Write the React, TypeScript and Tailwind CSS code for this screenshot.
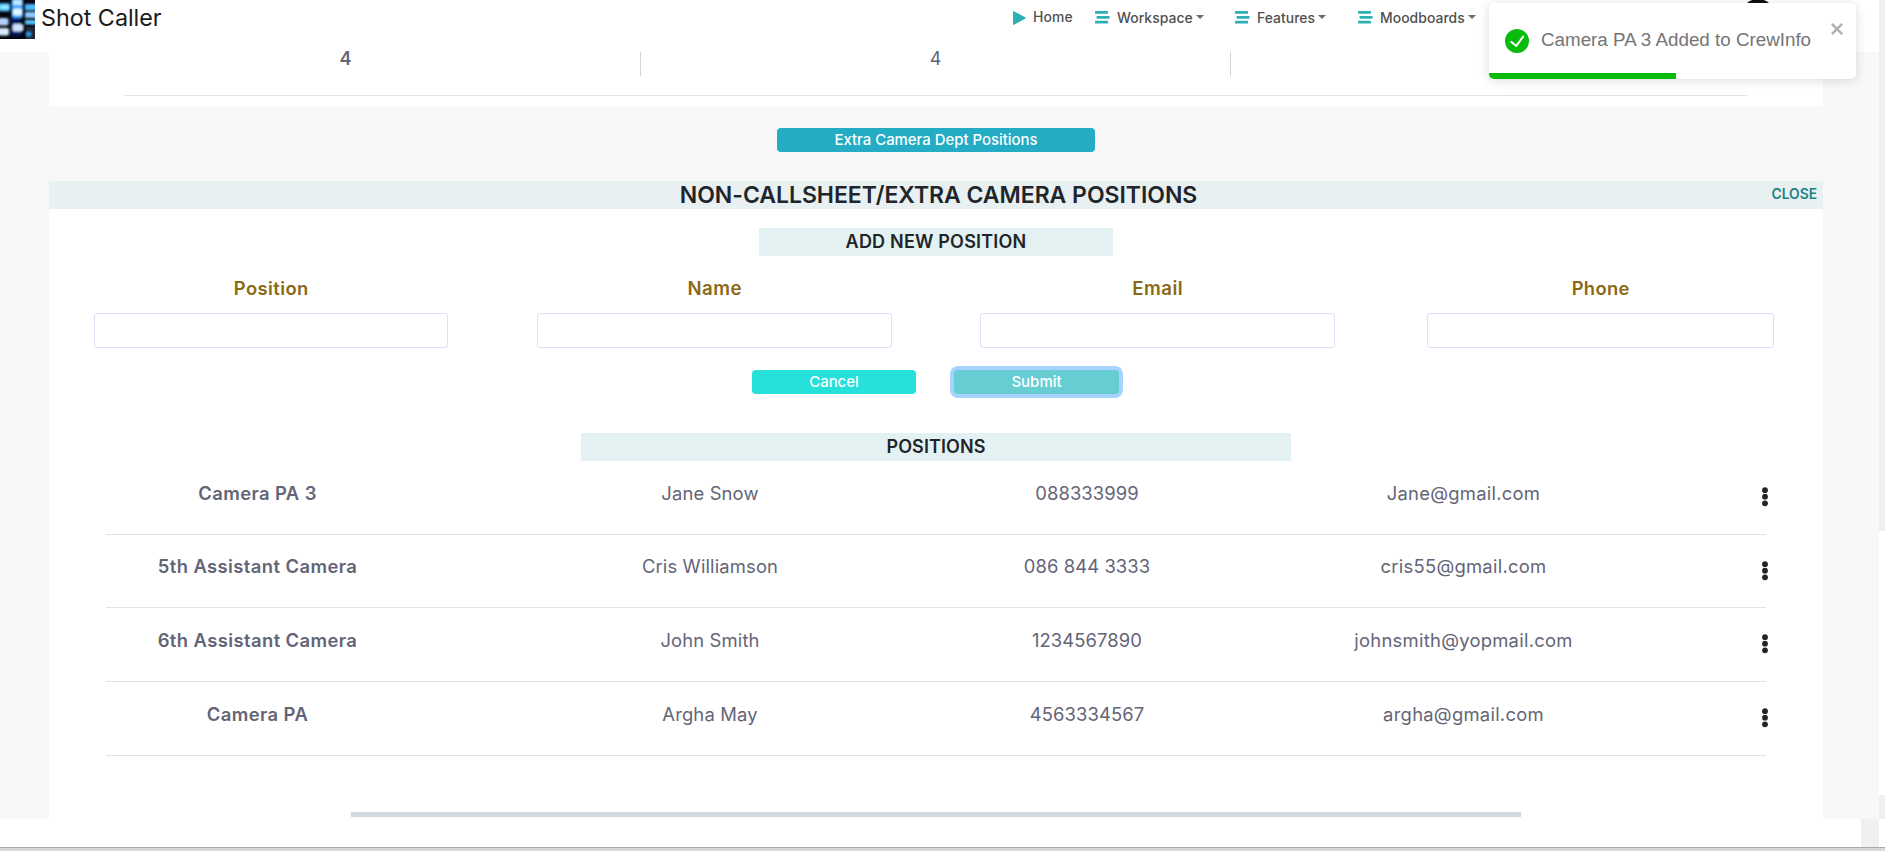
import type { ReactNode } from "react";

type Position = { title: string; name: string; phone: string; email: string; height: string; offset: string };

const positions: Position[] = [
  { title: "Camera PA 3", name: "Jane Snow", phone: "088333999", email: "Jane@gmail.com", height: "h-[74px]", offset: "pt-[19px]" },
  { title: "5th Assistant Camera", name: "Cris Williamson", phone: "086 844 3333", email: "cris55@gmail.com", height: "h-[73px]", offset: "pt-[18px]" },
  { title: "6th Assistant Camera", name: "John Smith", phone: "1234567890", email: "johnsmith@yopmail.com", height: "h-[74px]", offset: "pt-[19px]" },
  { title: "Camera PA", name: "Argha May", phone: "4563334567", email: "argha@gmail.com", height: "h-[74px]", offset: "pt-[19px]" },
];

function Logo() {
  return (
    <svg className="h-[39px] w-[35px] shrink-0" viewBox="0 0 35 39">
      <defs>
        <filter id="glow" x="-20%" y="-20%" width="140%" height="140%">
          <feGaussianBlur stdDeviation="0.8" />
        </filter>
      </defs>
      <rect width="35" height="39" fill="#06070f" />
      <rect x="26" y="27" width="9" height="12" fill="#25252e" />
      <g filter="url(#glow)">
        <rect x="11" y="0" width="10" height="36" fill="#02125e" />
        <rect x="-2" y="3" width="12" height="8.5" rx="2" fill="#35aaf0" />
        <rect x="0" y="5" width="9" height="4.5" rx="1" fill="#8fe6ff" />
        <rect x="12" y="-2" width="11" height="20" rx="2" fill="#3a9dfa" />
        <rect x="13" y="0" width="9" height="5" rx="1" fill="#bdeaff" />
        <rect x="13" y="8.5" width="9" height="7" rx="2" fill="#e3fbff" />
        <rect x="25" y="4" width="12" height="6.5" rx="1" fill="#4fb8fa" />
        <rect x="25" y="12" width="12" height="6" rx="1" fill="#8bcbff" />
        <rect x="25" y="20" width="12" height="4.5" rx="1" fill="#58c8ff" />
        <rect x="-2" y="18" width="10.5" height="7.5" rx="2" fill="#b4d2ff" />
        <rect x="-2" y="28" width="11" height="7.5" rx="2" fill="#d5edff" />
        <rect x="12.5" y="24" width="11" height="7.5" rx="2" fill="#cfe2ff" />
        <rect x="26" y="31.5" width="5.5" height="5" rx="1.5" fill="#219cf5" />
      </g>
    </svg>
  );
}

function LinesIcon() {
  return (
    <svg className="h-[13px] w-[15px] shrink-0" viewBox="0 0 15 13" fill="#2bb1b3">
      <rect x="0" y="0" width="13" height="2.8" rx="0.6" />
      <rect x="1.6" y="4.9" width="13" height="2.8" rx="0.6" />
      <rect x="0" y="9.7" width="13" height="2.8" rx="0.6" />
    </svg>
  );
}

function NavMenu({ children, width }: { children: ReactNode; width: string }) {
  return (
    <div className={`flex shrink-0 items-center ${width}`}>
      <LinesIcon />
      <span className="ml-[7px] mt-[2px] tracking-[0.05px]">{children}</span>
      <svg className="-mt-px ml-[3px] h-[4px] w-[8px]" viewBox="0 0 8 4" fill="#6b6b6b">
        <path d="M0 0h8L4 4z" />
      </svg>
    </div>
  );
}

function Header() {
  return (
    <header className="flex h-[52px] w-[1879px] shrink-0 items-start overflow-hidden bg-white">
      <Logo />
      <div className="ml-[6px] w-[972px] pt-px text-[23.3px] leading-[34px] text-[#1a1a1a]">Shot Caller</div>
      <nav className="flex h-[35px] items-center text-[13.9px] font-[450] text-[#505050]">
        <div className="flex w-[82px] items-center">
          <svg className="mt-[2px] h-[14px] w-[13px]" viewBox="0 0 13 14" fill="#2bb1b3">
            <path d="M0 1Q0 0 1 .3L12.4 6.4Q13 7 12.4 7.6L1 13.7Q0 14 0 13z" />
          </svg>
          <span className="ml-[7px] tracking-[0.15px]">Home</span>
        </div>
        <NavMenu width="w-[140px]">Workspace</NavMenu>
        <NavMenu width="w-[123px]">Features</NavMenu>
        <NavMenu width="w-[388px]">Moodboards</NavMenu>
      </nav>
      <div className="-mt-px h-[34px] w-[34px] -translate-x-[5px] shrink-0 rounded-full bg-[#0c100e]" />
    </header>
  );
}

function Toast() {
  return (
    <div className="absolute left-[1489px] top-[3px] flex h-[76px] w-[367px] flex-col overflow-hidden rounded-[5px] bg-white shadow-[0_1px_10px_0_rgba(0,0,0,0.1),0_2px_15px_0_rgba(0,0,0,0.05)]">
      <div className="flex h-[70px] items-start pl-[16px]">
        <svg className="mt-[26px] h-[24px] w-[24px] shrink-0" viewBox="0 0 24 24" fill="#07bc0c">
          <path d="M12 0a12 12 0 1012 12A12.014 12.014 0 0012 0zm6.927 8.2l-6.845 9.289a1.011 1.011 0 01-1.43.188l-4.888-3.908a1 1 0 111.25-1.562l4.076 3.261 6.227-8.451a1 1 0 111.61 1.183z" />
        </svg>
        <span className="ml-[12px] mt-[25px] w-[290px] whitespace-nowrap font-['Liberation_Sans',sans-serif] text-[18.8px] leading-6 text-[#757575]">
          Camera PA 3 Added to CrewInfo
        </span>
        <svg className="mt-[20px] h-[12px] w-[12px] shrink-0" viewBox="1 3 10.46 10.46" fill="#b1b1b1">
          <path
            fillRule="evenodd"
            d="M7.71 8.23l3.75 3.75-1.48 1.48-3.75-3.75-3.75 3.75L1 11.98l3.75-3.75L1 4.48 2.48 3l3.75 3.75L9.98 3l1.48 1.48-3.75 3.75z"
          />
        </svg>
      </div>
      <div className="h-[6px] w-[187px] bg-[#07bc0c]" />
    </div>
  );
}

function Field({ label, className, labelClass }: { label: string; className: string; labelClass: string }) {
  return (
    <label className={`flex flex-col items-center ${className}`}>
      <span className={`pl-[0.5px] font-semibold leading-[27px] text-[#8a6914] ${labelClass}`}>{label}</span>
      <input className="mt-[11px] h-[35px] w-full rounded-[3px] border border-[#dfdff7] bg-white" />
    </label>
  );
}

function DotsIcon() {
  return (
    <svg className="-mr-[2px] mt-[26px] h-[20px] w-[6px]" viewBox="0 0 6 20" fill="#212529">
      <circle cx="3" cy="3.2" r="2.9" />
      <circle cx="3" cy="9.7" r="2.9" />
      <circle cx="3" cy="16.3" r="2.9" />
    </svg>
  );
}

function PositionRow({ row }: { row: Position }) {
  return (
    <div className={`grid grid-cols-[303px_112px_377px_377px_377px_114px] border-b border-[#e1e3e5] text-center text-[18.4px] leading-[27px] text-[#636577] ${row.height}`}>
      <div className={`font-semibold tracking-[0.42px] ${row.offset}`}>{row.title}</div>
      <div />
      <div className={`pl-px tracking-[0.15px] ${row.offset}`}>{row.name}</div>
      <div className={`pl-px tracking-[0.1px] ${row.offset}`}>{row.phone}</div>
      <div className={`tracking-[0.27px] ${row.offset}`}>{row.email}</div>
      <div className="flex justify-end">
        <DotsIcon />
      </div>
    </div>
  );
}

export default function App() {
  return (
    <div className="relative flex h-[851px] w-[1885px] flex-col overflow-hidden bg-white font-['Inter',sans-serif]">
      <div className="flex h-[847px] shrink-0">
        <div className="flex w-[1879px] shrink-0 flex-col">
          <Header />
          <main className="flex h-[767px] flex-col bg-[#f8f8f8] pl-[49px] pr-[56px]">
            <section className="flex h-[54px] flex-col bg-white pl-[75px] pr-[76px]">
              <div className="flex h-[43px] text-center text-[18px] leading-[13px] text-[#636577]">
                <div className="w-[516px] pr-[73px] font-semibold">4</div>
                <div className="h-[24px] w-px bg-[#ccd9d7]" />
                <div className="w-[589px]">4</div>
                <div className="h-[24px] w-px bg-[#ccd9d7]" />
              </div>
              <div className="h-px bg-[#e1e3e5]" />
            </section>

            <div className="flex h-[75px] justify-center pt-[22px]">
              <button className="h-[24px] w-[318px] rounded-[4px] bg-[#24acc4] text-[14.9px] font-medium text-white">
                Extra Camera Dept Positions
              </button>
            </div>

            <section className="flex grow flex-col bg-white">
              <div className="grid h-[28px] grid-cols-[100px_1fr_100px] items-center bg-[#e8f0f2]">
                <div />
                <h2 className="pl-[5px] text-center text-[23px] font-semibold leading-[28px] tracking-[-0.03px] text-[#212529]">
                  NON-CALLSHEET/EXTRA CAMERA POSITIONS
                </h2>
                <button className="pb-px pr-[6px] text-right text-[13.8px] font-semibold text-[#1b8284]">CLOSE</button>
              </div>

              <h3 className="mt-[19px] h-[28px] w-[354px] self-center bg-[#e4f1f2] text-center text-[18px] font-semibold leading-[28px] tracking-[0.2px] text-[#212529]">
                ADD NEW POSITION
              </h3>

              <form className="mt-[19px] flex pl-[45px]">
                <Field label="Position" className="w-[354px]" labelClass="text-[18.4px] tracking-[0.4px]" />
                <Field label="Name" className="ml-[89px] w-[355px]" labelClass="text-[18.6px] tracking-[0.5px]" />
                <Field label="Email" className="ml-[88px] w-[355px]" labelClass="text-[18.6px] tracking-[0.5px]" />
                <Field label="Phone" className="ml-[92px] w-[347px]" labelClass="text-[18.4px] tracking-[0.35px]" />
              </form>

              <div className="mt-[22px] flex pl-[703px]">
                <button className="h-[24px] w-[164px] rounded-[4px] bg-[#26e0da] text-[14.9px] font-medium text-white">Cancel</button>
                <button className="ml-[38px] h-[24px] w-[165px] rounded-[4px] bg-[#66cdd2] text-[15px] font-medium text-white ring-[4px] ring-[#a6d2ff]">
                  Submit
                </button>
              </div>

              <h3 className="mt-[39px] h-[28px] w-[710px] self-center bg-[#e4f1f2] text-center text-[18px] font-semibold leading-[28px] tracking-[0.1px] text-[#212529]">
                POSITIONS
              </h3>

              <div className="w-[1717px] pl-[57px]">
                {positions.map((row) => (
                  <PositionRow key={row.title} row={row} />
                ))}
              </div>

              <div className="mt-[56px] h-[5px] w-[1170px] self-center bg-[#d2d9dc]" />
            </section>
          </main>
          <div className="flex h-[28px] justify-end bg-white">
            <div className="w-[18px] bg-[#f0f0f0]" />
          </div>
        </div>
        <div className="flex w-[6px] flex-col bg-white">
          <div className="h-[531px] bg-[#f0f0f0]" />
          <div className="mt-[264px] h-[24px] bg-[#f0f0f0]" />
        </div>
      </div>
      <div className="h-[4px] border-t border-[#a9a9a9] bg-[#d9d9da]" />
      <Toast />
    </div>
  );
}
